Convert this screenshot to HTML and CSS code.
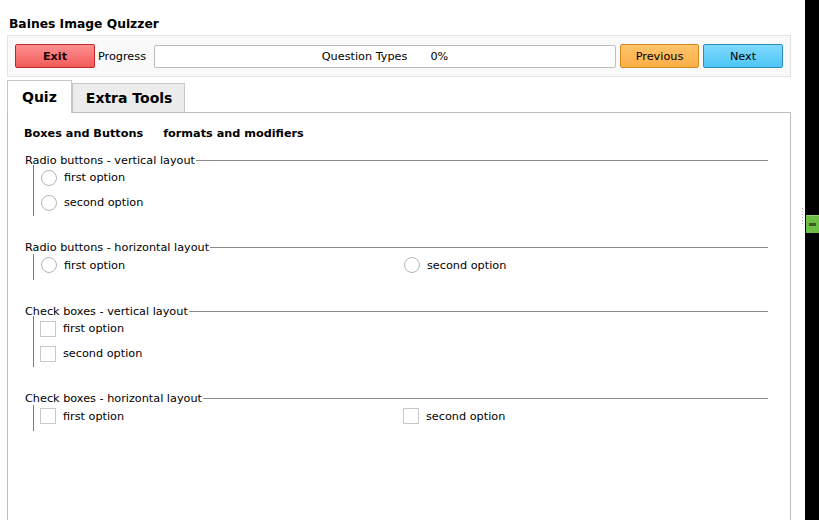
FILE: index.html
```html
<!DOCTYPE html>
<html>
<head>
<meta charset="utf-8">
<link rel="stylesheet" href="styles.css">
</head>
<body>
<div class="app">
  <div class="main">
    <div class="title">Baines Image Quizzer</div>
    <div class="toolbar">
      <button class="btn btn-exit">Exit</button>
      <span class="progress-label">Progress</span>
      <div class="progress"><span class="progress-text">Question Types</span><span class="progress-pct">0%</span></div>
      <button class="btn btn-prev">Previous</button>
      <button class="btn btn-next">Next</button>
    </div>
    <div class="tabs">
      <div class="tab active">Quiz</div>
      <div class="tab">Extra Tools</div>
    </div>
    <div class="panel">
      <div class="subtabs">
        <span class="subtab">Boxes and Buttons</span>
        <span class="subtab">formats and modifiers</span>
      </div>

      <div class="group">
        <div class="legend"><span class="legend-text">Radio buttons - vertical layout</span><span class="legend-line"></span></div>
        <div class="group-body vertical">
          <label class="opt"><span class="radio"></span>first option</label>
          <label class="opt"><span class="radio"></span>second option</label>
        </div>
      </div>

      <div class="group">
        <div class="legend"><span class="legend-text">Radio buttons - horizontal layout</span><span class="legend-line"></span></div>
        <div class="group-body horizontal">
          <label class="opt"><span class="radio"></span>first option</label>
          <label class="opt"><span class="radio"></span>second option</label>
        </div>
      </div>

      <div class="group">
        <div class="legend"><span class="legend-text">Check boxes - vertical layout</span><span class="legend-line"></span></div>
        <div class="group-body vertical">
          <label class="opt"><span class="check"></span>first option</label>
          <label class="opt"><span class="check"></span>second option</label>
        </div>
      </div>

      <div class="group">
        <div class="legend"><span class="legend-text">Check boxes - horizontal layout</span><span class="legend-line"></span></div>
        <div class="group-body horizontal">
          <label class="opt"><span class="check"></span>first option</label>
          <label class="opt"><span class="check"></span>second option</label>
        </div>
      </div>
    </div>
  </div>
  <div class="side">
    <div class="dots"></div>
    <div class="side-tab"><span class="side-arrow"></span></div>
  </div>
</div>
</body>
</html>
```
FILE: styles.css
```css
* { box-sizing: border-box; }
html, body { margin: 0; padding: 0; height: 100%; }
body {
  font-family: "DejaVu Sans", Verdana, sans-serif;
  font-size: 11.25px;
  color: #000;
  background: #fff;
  overflow: hidden;
}
.app { display: flex; height: 520px; }
.main { width: 805px; padding-left: 7px; padding-right: 14px; display: flex; flex-direction: column; }
.side { width: 14px; background: #000; position: relative; }
.side-tab {
  position: absolute; left: 1px; top: 215px; width: 13px; height: 18px;
  background: #6cbf44; border-top: 1px solid #8fd66a;
}
.side-arrow { position: absolute; left: 3px; top: 7px; width: 7px; height: 3px; background: #3a5a2a; }
.dots { position: absolute; left: -3px; top: 208px; width: 1px; height: 16px;
  background: repeating-linear-gradient(#aaa 0 1px, transparent 1px 3px); }

.title { font-weight: bold; font-size: 12.3px; padding: 17px 0 0 2px; height: 35px; }

.toolbar {
  height: 42px;
  border: 1px solid #e3e3e3;
  background: #f9f9f9;
  display: flex; align-items: center;
  padding: 0 7px;
}
.btn {
  height: 24px; width: 80px;
  font-family: inherit; font-size: 11.25px;
  border-radius: 2px; padding: 0;
  color: #000;
}
.btn-exit {
  background: linear-gradient(#ff9090, #f25a5a);
  border: 1px solid #c02828;
  font-weight: bold; color: #1a0000;
}
.progress-label { margin: 0 8px 0 3px; }
.progress {
  flex: 1; height: 23px;
  background: #fff; border: 1px solid #bdbdbd; border-radius: 2px;
  display: flex; align-items: center; justify-content: center;
}
.progress-pct { margin-left: 23px; }
.btn-prev {
  margin-left: 4px; width: 79px;
  background: linear-gradient(#ffc46c, #fcae45);
  border: 1px solid #d4891e;
}
.btn-next {
  margin-left: 4px;
  background: linear-gradient(#7fd9ff, #4ec6f6);
  border: 1px solid #2b8cbd;
}

.tabs { display: flex; margin-top: 3px; height: 32px; align-items: flex-end; position: relative; z-index: 1; }
.tab {
  font-weight: bold; font-size: 14px;
  height: 29px; padding: 0 12px 0 13px;
  background: #ececec;
  border: 1px solid #c6c6c6; border-bottom: none;
  display: flex; align-items: center;
}
.tab.active {
  background: #fff; padding: 0 14px 0 14px;
  border-color: #c6c6c6;
  margin-bottom: -1px; height: 33px;
}

.panel {
  flex: 1;
  border: 1px solid #bdbdbd; border-bottom: none;
  padding: 13px 22px 0 16px;
}
.subtabs { font-weight: bold; display: flex; gap: 20px; height: 20px; padding-top: 1px; }

.group { margin-top: 7px; margin-bottom: 24px; }
.legend { display: flex; align-items: center; height: 14px; margin-left: 1px; }
.legend-line { flex: 1; border-top: 1px solid #8a8a8a; margin-left: 1px; }
.group-body { border-left: 1px solid #7a7a7a; margin-left: 9px; padding-left: 7px; }
.group-body.vertical { display: flex; flex-direction: column; margin-top: -2px; padding-bottom: 1px; }
.group-body.horizontal { display: flex; height: 26px; padding-top: 1px; margin-top: 0; align-items: flex-start; }
.group-body.horizontal .opt { width: 363px; height: 20px; }
.opt { display: flex; align-items: center; height: 25px; gap: 7px; }
.radio {
  width: 16px; height: 16px; border-radius: 50%;
  border: 1px solid #b5b5b5; background: #fff;
}
.check {
  width: 16px; height: 16px;
  border: 1px solid #c8c8c8; background: #fff;
  margin-left: -1px;
}
```
